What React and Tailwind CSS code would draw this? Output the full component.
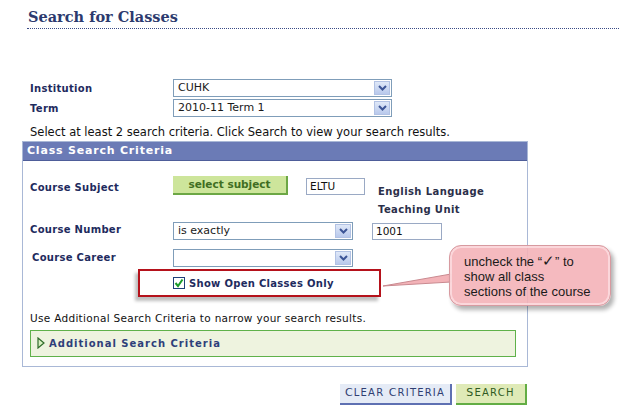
import React from "react";

function Chevron() {
  return (
    <div className="w-[16px] h-[14px] mr-[1px] bg-gradient-to-b from-[#dfe8f8] to-[#b9c9ec] border border-[#b2c2e4] flex items-center justify-center">
      <svg width="9" height="6" viewBox="0 0 9 6">
        <path d="M1 1 L4.5 4.5 L8 1" stroke="#3c5596" strokeWidth="2" fill="none" />
      </svg>
    </div>
  );
}

function Select({ value, w }) {
  return (
    <div className={`${w} h-[18px] border border-[#7f9db9] bg-white flex items-center justify-between`}>
      <span className="pl-[4px] text-[11px] text-[#1a1a1a]">{value}</span>
      <Chevron />
    </div>
  );
}

const label = "text-[10px] font-bold text-[#1e2b5e] tracking-[0.3px]";

export default function App() {
  return (
    <div className="relative w-[619px] h-[419px] bg-white font-['DejaVu_Sans',sans-serif] overflow-hidden">
      <div className="pt-[7px] pl-[27px]">
        <div className="font-['DejaVu_Serif',serif] font-bold text-[14.5px] text-[#2c3a6e] leading-[20px] pl-[1px]">
          Search for Classes
        </div>
        <div className="mt-[1px] border-b border-dotted border-[#3a4a86] h-0 w-[592px]" />
      </div>

      <div className="mt-[50px] pl-[30px] flex flex-col gap-[2px]">
        <div className="flex items-center h-[18px]">
          <div className={`${label} w-[143px]`}>Institution</div>
          <Select value="CUHK" w="w-[219px]" />
        </div>
        <div className="flex items-center h-[18px]">
          <div className={`${label} w-[143px]`}>Term</div>
          <Select value="2010-11 Term 1" w="w-[219px]" />
        </div>
      </div>

      <div className="pl-[30px] mt-[8px] text-[11.5px] leading-[14px] text-[#111]">
        Select at least 2 search criteria. Click Search to view your search results.
      </div>

      <div className="ml-[22px] mt-[2px] w-[506px] h-[226px] border border-[#a9b8d6]">
        <div className="h-[19px] bg-[#6b7bb6] border-b border-[#4e5d99] flex items-center pl-[4px]">
          <span className="text-[11px] font-bold text-white tracking-[0.8px]">Class Search Criteria</span>
        </div>

        <div className="pl-[7px] pt-[15px]">
          <div className="flex items-start h-[44px]">
            <div className={`${label} w-[143px] pt-[4px]`}>Course Subject</div>
            <div className="w-[115px] h-[19px] bg-[#cde59b] border-b-2 border-r-2 border-[#6ca745] flex items-center justify-center">
              <span className="text-[10.5px] font-bold text-[#3f6e22]">select subject</span>
            </div>
            <div className="ml-[18px] mt-[2px] w-[59px] h-[17px] border border-[#9aa9c4] bg-white text-[10.5px] pl-[3px] leading-[15px] text-[#111]">
              ELTU
            </div>
            <div className="ml-[13px] mt-[7px] text-[10px] font-bold text-[#2b2f4a] leading-[18px] tracking-[0.4px]">
              <div>English Language</div>
              <div>Teaching Unit</div>
            </div>
          </div>

          <div className="flex items-center h-[18px] mt-[2px]">
            <div className={`${label} w-[143px] -mt-[4px]`}>Course Number</div>
            <Select value="is exactly" w="w-[180px]" />
            <div className="ml-[19px] w-[70px] h-[17px] border border-[#9aa9c4] bg-white text-[10.5px] pl-[3px] leading-[15px] text-[#111]">
              1001
            </div>
          </div>

          <div className="flex items-center h-[18px] mt-[9px]">
            <div className={`${label} w-[143px] -mt-[2px] pl-[2px]`}>Course Career</div>
            <Select value="" w="w-[180px]" />
          </div>

          <div className="ml-[108px] mt-[2px] w-[243px] h-[28px] border-2 border-[#b5121b] shadow-[-3px_4px_3px_rgba(0,0,0,0.25)] flex items-center">
            <div className="ml-[33px] w-[12px] h-[12px] border border-[#1e3f7a] bg-white flex items-center justify-center">
              <svg width="10" height="10" viewBox="0 0 10 10">
                <path d="M1.5 5 L4 8 L8.5 1.5" stroke="#1a9a2a" strokeWidth="2" fill="none" />
              </svg>
            </div>
            <span className={`${label} ml-[4px]`}>Show Open Classes Only</span>
          </div>

          <div className="mt-[14px] text-[10.5px] text-[#111] tracking-[0.3px]">
            Use Additional Search Criteria to narrow your search results.
          </div>

          <div className="mt-[3px] w-[486px] h-[27px] border border-[#5fb14a] bg-[#eef3df] flex items-center pl-[6px]">
            <svg width="8" height="12" viewBox="0 0 8 12">
              <path d="M1 1 L7 6 L1 11 Z" fill="#d8efc0" stroke="#2f6b2a" strokeWidth="1.2" />
            </svg>
            <span className="ml-[4px] text-[10px] font-bold text-[#2e3f7a] tracking-[1px]">Additional Search Criteria</span>
          </div>
        </div>
      </div>

      <div className="mt-[17px] flex pl-[340px] gap-[4px]">
        <div className="w-[112px] h-[21px] bg-[#e5ebf6] border-b-2 border-r-2 border-[#5e70b2] flex items-center justify-center">
          <span className="text-[10px] tracking-[1.2px] text-[#2f3e72]">
            <span className="text-[11px]">C</span>LEAR <span className="text-[11px]">C</span>RITERIA
          </span>
        </div>
        <div className="w-[71px] h-[21px] bg-[#dfeab7] border-b-2 border-r-2 border-[#63ad45] flex items-center justify-center">
          <span className="text-[10px] tracking-[1.2px] text-[#2f5a22]">
            <span className="text-[11px]">S</span>EARCH
          </span>
        </div>
      </div>

      <div className="absolute left-[383px] top-[262px]">
        <svg width="70" height="30" viewBox="0 0 70 30">
          <path d="M0 24 L68 12 L68 20 Z" fill="#f3b3b8" stroke="#c98a90" strokeWidth="1" />
        </svg>
      </div>
      <div className="absolute left-[449px] top-[245px] w-[162px] h-[61px] rounded-[12px] bg-[rgba(244,178,184,0.9)] border border-[#d79aa0] shadow-[3px_4px_4px_rgba(0,0,0,0.3),inset_0_0_0_2px_rgba(255,235,238,0.6)] pl-[14px] pt-[8px] font-['Liberation_Sans',sans-serif] text-[13px] leading-[15px] text-[#1a1a1a]">
        <div>uncheck the “<span className="text-[15px] leading-[13px]">✓</span>” to</div>
        <div>show all class</div>
        <div>sections of the course</div>
      </div>
    </div>
  );
}
